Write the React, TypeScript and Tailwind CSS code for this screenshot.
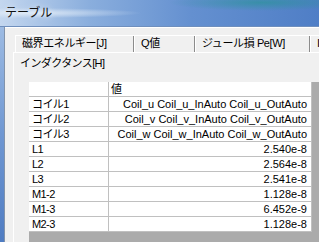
import React from "react";

const rows: [string, string][] = [
  ["コイル1", "Coil_u Coil_u_InAuto Coil_u_OutAuto"],
  ["コイル2", "Coil_v Coil_v_InAuto Coil_v_OutAuto"],
  ["コイル3", "Coil_w Coil_w_InAuto Coil_w_OutAuto"],
  ["L1", "2.540e-8"],
  ["L2", "2.564e-8"],
  ["L3", "2.541e-8"],
  ["M1-2", "1.128e-8"],
  ["M1-3", "6.452e-9"],
  ["M2-3", "1.128e-8"],
];

const font = { fontFamily: '"Liberation Sans", "Noto Sans CJK JP", sans-serif' };

const App = () => {
  return (
    <div
      className="w-[319px] h-[242px] overflow-hidden bg-[#f0f0f0] flex flex-col text-black"
      style={font}
    >
      {/* Title bar */}
      <div className="h-[26px] shrink-0 flex items-center pl-[5px] bg-[radial-gradient(ellipse_at_82%_10%,rgba(30,150,140,0.55),transparent_25%),radial-gradient(ellipse_at_8%_50%,#dce8f6,transparent_28%),linear-gradient(to_right,#c4d7ef,#8aaedd_28%,#6490d0_60%,#4f7ec6)]">
        <span className="text-[12px] leading-none text-[#111] [text-shadow:0_0_6px_#ffffff]">テーブル</span>
      </div>
      <div className="h-px shrink-0 bg-[#6f8fbd]" />

      <div className="flex flex-1 min-h-0">
        {/* window frame */}
        <div className="w-[4px] bg-gradient-to-b from-[#9dbbe3] via-[#6f97d2] to-[#4f7cc2]" />
        <div className="w-px bg-[#8193ab]" />

        <div className="flex-1 min-w-0 flex flex-col border-t border-white">
          {/* back tab row */}
          <div className="mt-[7px] ml-[10px] h-[17px] shrink-0 flex border-t border-l border-white whitespace-nowrap overflow-hidden text-[11px] leading-[15px] tracking-[-0.4px]">
            <div className="w-[118px] shrink-0 pl-[6px] border-r border-[#8c8c8c]">磁界エネルギー[J]</div>
            <div className="w-[61px] shrink-0 pl-[6px] border-l border-white border-r border-r-[#8c8c8c]">Q値</div>
            <div className="w-[115px] shrink-0 pl-[6px] border-l border-white border-r border-r-[#8c8c8c]">ジュール損 Pe[W]</div>
            <div className="w-[20px] shrink-0 pl-[6px] border-l border-white">I</div>
          </div>

          {/* front tab + page */}
          <div className="ml-[8px] flex-1 min-h-0 flex flex-col border-t border-l border-white">
            <div className="h-[18px] shrink-0 pl-[6px] pt-[4px] text-[11px] leading-[13px] tracking-[-0.6px] whitespace-nowrap">
              インダクタンス[H]
            </div>
            <div className="mt-[11px] ml-[15px] flex-1 bg-[#ababab] overflow-hidden">
              <div className="w-[283px] bg-white text-[11px] leading-[14px] whitespace-nowrap">
                <div className="flex h-[15px] border-b border-[#c0c0c0]">
                  <div className="w-[80px] shrink-0 border-r border-[#c0c0c0]" />
                  <div className="flex-1 pl-[2px] border-r border-[#c0c0c0]">値</div>
                </div>
                {rows.map(([name, value]) => (
                  <div key={name} className="flex h-[15px] border-b border-[#c0c0c0]">
                    <div className="w-[80px] shrink-0 pl-[3px] border-r border-[#c0c0c0] tracking-[-0.6px]">{name}</div>
                    <div className="flex-1 pr-[4px] text-right border-r border-[#c0c0c0]">{value}</div>
                  </div>
                ))}
              </div>
            </div>
          </div>
        </div>
      </div>
    </div>
  );
};

export default App;
